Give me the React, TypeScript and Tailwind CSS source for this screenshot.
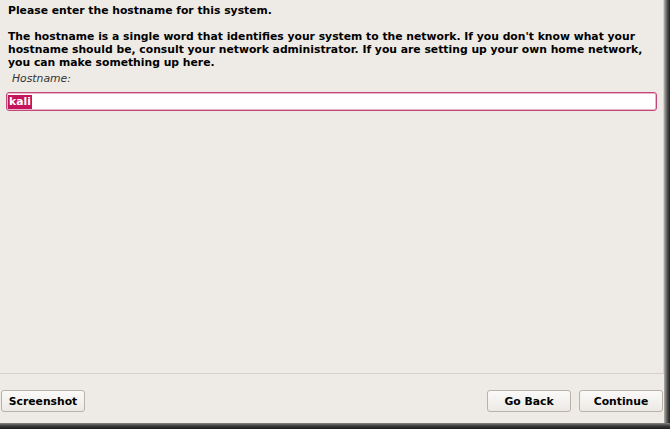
export default function App() {
  const font = { fontFamily: '"DejaVu Sans", sans-serif' };
  return (
    <div className="flex h-[429px] w-[670px] flex-col bg-[#3a3a3a]" style={font}>
      <div className="flex h-[423px]">
        <div className="flex w-[664px] flex-col bg-[#eeebe6] text-[10.8px] leading-[13px] text-black">
          <div className="flex h-[374px] flex-col border-b border-r border-[#d6d1ca] pl-[8px] pr-[8px]">
            <p className="mt-[4px] font-bold">Please enter the hostname for this system.</p>
            <p className="mt-[13px] font-bold">
              The hostname is a single word that identifies your system to the network. If you don't know what your hostname should be, consult your network administrator. If you are setting up your own home network, you can make something up here.
            </p>
            <p className="ml-[4px] mt-[3px] italic text-[#333]">Hostname:</p>
            <div className="-ml-[2px] -mr-[2px] mt-[7px] flex h-[19px] items-center rounded-[3px] border border-[#c2477a] bg-white pl-[1px] shadow-[inset_0_0_0_1px_#e9b6c9]">
              <span className="bg-[#c4155c] px-[1px] font-bold leading-[14px] text-white">kali</span>
            </div>
          </div>
          <div className="mt-[16px] flex items-center pl-[1px] pr-[1px]">
            <Btn label="Screenshot" />
            <div className="flex-1" />
            <Btn label="Go Back" />
            <div className="w-[8px]" />
            <Btn label="Continue" />
          </div>
        </div>
        <div className="w-[6px] bg-gradient-to-r from-[#b5b1ac] via-[#5a5a5a] to-[#1e1e1e]" />
      </div>
      <div className="h-[6px] bg-gradient-to-b from-[#8a8784] via-[#3a3a3a] to-[#1e1e1e]" />
    </div>
  );
}

function Btn({ label }: { label: string }) {
  return (
    <button className="h-[22px] w-[84px] rounded-[3px] border border-[#b9b2a8] bg-gradient-to-b from-[#fbfaf9] to-[#ece9e4] text-[10.8px] font-bold text-black">
      {label}
    </button>
  );
}
